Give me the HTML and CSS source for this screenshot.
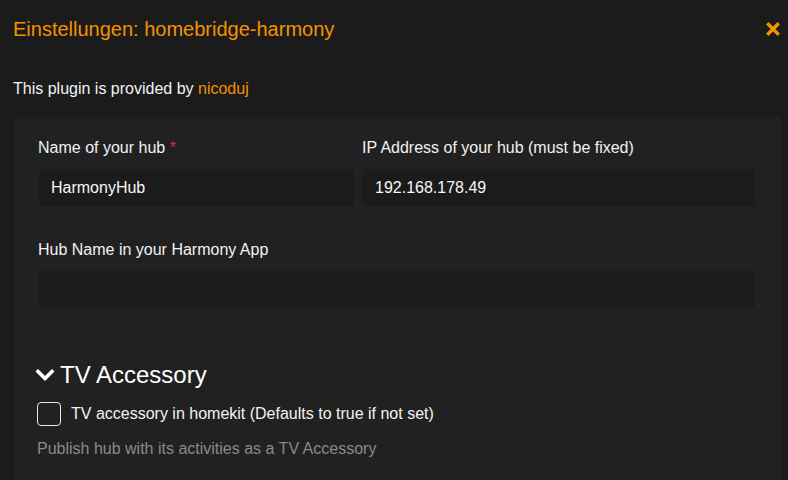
FILE: index.html
```html
<!DOCTYPE html>
<html>
<head>
<meta charset="utf-8">
<link rel="stylesheet" href="styles.css">
</head>
<body>
<div class="modal">
  <div class="header">
    <h1 class="title">Einstellungen: homebridge-harmony</h1>
    <span class="close">
      <svg width="14" height="14" viewBox="0 0 14 14"><path d="M2.5 2.5 L11.5 11.5 M11.5 2.5 L2.5 11.5" stroke="#f39200" stroke-width="3.4" stroke-linecap="square"/></svg>
    </span>
  </div>
  <p class="provided">This plugin is provided by <a class="author">nicoduj</a></p>
  <div class="panel">
    <div class="row two">
      <div class="field">
        <label class="lbl">Name of your hub <span class="req">*</span></label>
        <div class="input">HarmonyHub</div>
      </div>
      <div class="field">
        <label class="lbl">IP Address of your hub (must be fixed)</label>
        <div class="input">192.168.178.49</div>
      </div>
    </div>
    <div class="field single">
      <label class="lbl">Hub Name in your Harmony App</label>
      <div class="input"></div>
    </div>
    <h2 class="section">
      <svg class="chev" width="20" height="14" viewBox="0 0 20 14"><path d="M3 3.5 L10 10.5 L17 3.5" fill="none" stroke="#fff" stroke-width="3.6" stroke-linecap="square"/></svg>
      <span>TV Accessory</span>
    </h2>
    <div class="check">
      <span class="box"></span>
      <span class="check-lbl">TV accessory in homekit (Defaults to true if not set)</span>
    </div>
    <p class="help">Publish hub with its activities as a TV Accessory</p>
  </div>
</div>
</body>
</html>
```

FILE: styles.css
```css
html, body {
  margin: 0;
  padding: 0;
  background: #1b1b1b;
  font-family: "Liberation Sans", Arial, sans-serif;
  color: #f2f2f2;
  height: 100%;
  overflow: hidden;
}
.modal {
  padding: 0 7px 0 13px;
}
.header {
  display: flex;
  justify-content: space-between;
  align-items: center;
  height: 58px;
}
.title {
  margin: 0;
  font-size: 20px;
  line-height: 24px;
  font-weight: normal;
  color: #f39200;
}
.close {
  display: flex;
  margin-right: 1px;
}
.provided {
  margin: 21px 0 18px;
  font-size: 16px;
  line-height: 20px;
  color: #f2f2f2;
}
.author { color: #f39200; }
.panel {
  background: #212121;
  border-radius: 4px 4px 0 0;
  padding: 21px 26px 21px 25px;
}
.row.two {
  display: grid;
  grid-template-columns: 316px 393px;
  gap: 8px;
}
.field { display: flex; flex-direction: column; }
.lbl {
  font-size: 16px;
  line-height: 20px;
  color: #f2f2f2;
  margin-bottom: 11px;
}
.req { color: #e0212d; }
.input {
  height: 37px;
  background: #1b1b1b;
  border-radius: 4px;
  margin-left: 1px;
  box-sizing: border-box;
  padding: 0 12px;
  font-size: 16px;
  line-height: 37px;
  color: #f7f7f7;
}
.single { margin-top: 34px; }
.section {
  margin: 53px 0 0 -3px;
  font-size: 24px;
  font-weight: normal;
  line-height: 28px;
  color: #fff;
  display: flex;
  align-items: center;
  gap: 5px;
}
.chev { display: block; }
.check {
  display: flex;
  align-items: center;
  margin-top: 13px;
  margin-left: -1px;
}
.box {
  width: 22px;
  height: 22px;
  border: 1px solid #e8e8e8;
  border-radius: 4px;
  margin-right: 10px;
}
.check-lbl {
  font-size: 16px;
  line-height: 20px;
  color: #f2f2f2;
}
.help {
  margin: 13px 0 0 -1px;
  font-size: 16px;
  line-height: 20px;
  color: #8a8a8a;
}
```
